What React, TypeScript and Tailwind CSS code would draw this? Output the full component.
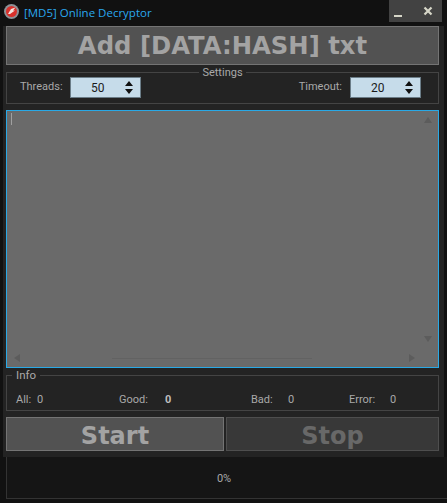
import React from "react";

function Spin({ value }: { value: string }) {
  return (
    <div className="flex h-[21px] w-[71px] items-center border border-[#6b7d88] bg-[#c6dcea] text-[12px] text-[#1a1a1a]">
      <span className="ml-[20px] flex-1">{value}</span>
      <svg width="10" height="15" viewBox="0 0 10 15" className="mr-[6px]">
        <path d="M5 1 L9 6 L1 6 Z M1 9 L9 9 L5 14 Z" fill="#111" />
      </svg>
    </div>
  );
}

function Stat({ label, value, className, labelWidth, bold }: { label: string; value: string; className: string; labelWidth: string; bold?: boolean }) {
  return (
    <div className={`flex items-center ${className}`}>
      <span className={`text-[#a9a9a9] ${labelWidth}`}>{label}</span>
      <span className={bold ? "font-bold text-[#bdbdbd]" : "text-[#a9a9a9]"}>{value}</span>
    </div>
  );
}

export default function App() {
  return (
    <div className="flex h-[503px] w-[447px] flex-col overflow-hidden bg-[#111111] font-['Roboto','Liberation_Sans',sans-serif]">
      <div className="flex h-[26px] shrink-0 items-start">
        <svg width="15" height="15" viewBox="0 0 15 15" className="ml-[4px] mt-[4px]">
          <circle cx="7.5" cy="7.5" r="7.5" fill="#8d9297" />
          <circle cx="7.5" cy="7.5" r="5.5" fill="#d8312c" />
          <path d="M4 10 L7 5 L11.5 3.5 L9 6.5 L11 6.5 L6 10 Z" fill="#f3e6e0" />
        </svg>
        <span className="ml-[5px] mt-[4px] font-['Open_Sans',sans-serif] text-[11.5px] leading-[18px] text-[#2aa8ee]">[MD5] Online Decryptor</span>
        <div className="ml-auto mr-[5px] flex h-[22px] w-[53px] items-start bg-[#424242]">
          <div className="ml-[5px] mt-[15px] h-[2px] w-[8px] bg-[#d6d6c8]" />
          <svg width="10" height="10" viewBox="0 0 10 10" className="ml-[21px] mt-[6px]">
            <path d="M1.5 1.5 L8.5 8.5 M8.5 1.5 L1.5 8.5" stroke="#d6d6c8" strokeWidth="2.2" />
          </svg>
        </div>
      </div>

      <div className="ml-[3px] mr-[3px] flex h-[431px] shrink-0 flex-col bg-[#232323] pl-[3px] pr-[5px]">
        <button className="flex h-[39px] shrink-0 items-center justify-center border border-[#747474] bg-[#525252] pt-[2px] font-['DejaVu_Sans',sans-serif] text-[24.3px] font-bold text-[#a3a3a3]">
          Add [DATA:HASH] txt
        </button>

        <fieldset className="mt-[1px] h-[38px] shrink-0 border border-[#444444] px-[13px]">
          <legend className="mx-auto px-[3px] text-[11px] leading-[13px] text-[#a9a9a9]">Settings</legend>
          <div className="-mt-[2px] flex items-center text-[11px] text-[#a9a9a9]">
            <span className="w-[50px]">Threads:</span>
            <Spin value="50" />
            <span className="ml-auto mr-[8px]">Timeout:</span>
            <div className="mr-[4px]">
              <Spin value="20" />
            </div>
          </div>
        </fieldset>

        <div className="relative mt-[6px] h-[258px] shrink-0 border border-[#29a9e6] bg-[#6a6a6a]">
          <div className="absolute left-[4px] top-[2px] h-[12px] w-px bg-[#a0a0a0]" />
          <svg width="8" height="8" viewBox="0 0 8 8" className="absolute right-[6px] top-[5px]"><path d="M4 1 L8 7 L0 7 Z" fill="#5c5c5c" /></svg>
          <svg width="8" height="8" viewBox="0 0 8 8" className="absolute bottom-[24px] right-[6px]"><path d="M0 1 L8 1 L4 7 Z" fill="#5c5c5c" /></svg>
          <svg width="8" height="8" viewBox="0 0 8 8" className="absolute bottom-[5px] left-[6px]"><path d="M7 0 L7 8 L1 4 Z" fill="#5c5c5c" /></svg>
          <svg width="8" height="8" viewBox="0 0 8 8" className="absolute bottom-[5px] right-[22px]"><path d="M1 0 L1 8 L7 4 Z" fill="#5c5c5c" /></svg>
          <div className="absolute bottom-[8px] left-[105px] h-px w-[200px] bg-[#626262]" />
        </div>

        <fieldset className="h-[43px] shrink-0 border border-[#444444] pl-[9px]">
          <legend className="-ml-[4px] px-[4px] text-[11.5px] leading-[14px] text-[#a9a9a9]">Info</legend>
          <div className="mt-[11px] flex h-[14px] items-center text-[11px]">
            <Stat label="All:" value="0" className="w-[103px]" labelWidth="w-[21px]" />
            <Stat label="Good:" value="0" className="w-[132px]" labelWidth="w-[46px]" bold />
            <Stat label="Bad:" value="0" className="w-[98px]" labelWidth="w-[37px]" />
            <Stat label="Error:" value="0" className="" labelWidth="w-[41px]" />
          </div>
        </fieldset>

        <div className="mt-[6px] flex h-[34px] shrink-0 gap-[2px]">
          <button className="flex h-full w-[218px] items-center justify-center border border-[#747474] bg-[#525252] pt-[3px] font-['DejaVu_Sans',sans-serif] text-[24px] font-bold text-[#a3a3a3]">
            Start
          </button>
          <button className="flex h-full flex-1 items-center justify-center border border-[#4e4e4e] bg-[#383838] pt-[3px] font-['DejaVu_Sans',sans-serif] text-[24px] font-bold text-[#686868]">
            Stop
          </button>
        </div>
      </div>

      <div className="ml-[6px] flex h-[42px] shrink-0 items-center justify-center border-b border-l border-[#333333] bg-[#151515] pr-[6px] pt-[4px] text-[11px] text-[#a9a9a9]">
        0%
      </div>
    </div>
  );
}
